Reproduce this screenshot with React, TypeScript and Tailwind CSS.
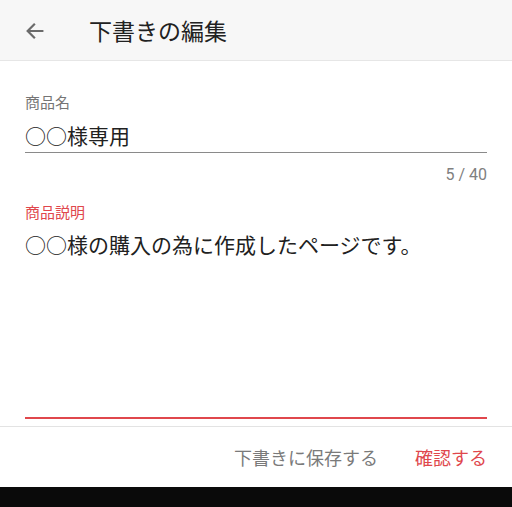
import { VoidFunctionComponent } from "react";

const jp = { fontFamily: '"Noto Sans CJK JP", "Noto Sans", sans-serif' };

const BackArrow: VoidFunctionComponent = () => (
  <svg width="22" height="22" viewBox="0 0 24 24" fill="none">
    <path
      d="M20 12H4.5M11 5l-7 7 7 7"
      stroke="#6b6b6b"
      strokeWidth="2.4"
      strokeLinecap="square"
    />
  </svg>
);

export default function App() {
  return (
    <div className="w-[512px] h-[507px] flex flex-col bg-white" style={jp}>
      <header className="h-[61px] shrink-0 flex items-center bg-[#f7f7f7] border-b border-[#e6e6e6]">
        <div className="pl-[24px] pt-[1px] flex items-center">
          <BackArrow />
        </div>
        <h1 className="ml-[43px] text-[23px] leading-[30px] text-[#212121]">
          下書きの編集
        </h1>
      </header>

      <main className="flex-1 flex flex-col px-[25px]">
        <div className="mt-[31px] text-[15px] leading-[20px] text-[#757575]">
          商品名
        </div>
        <div className="mt-[9px] pb-[3px] text-[21px] leading-[28px] text-[#212121] border-b border-[#8a8a8a]">
          ○○様専用
        </div>
        <div
          className="mt-[12px] text-right text-[16px] leading-[20px] text-[#808080]"
          style={{ fontFamily: "Roboto, sans-serif" }}
        >
          5 / 40
        </div>
        <div className="mt-[17px] text-[15px] leading-[20px] text-[#e0474c]">
          商品説明
        </div>
        <div className="mt-[8px] h-[189px] text-[21px] leading-[28px] text-[#212121] border-b-2 border-[#e0474c]">
          ○○様の購入の為に作成したページです。
        </div>
      </main>

      <footer className="h-[61px] shrink-0 mt-[5px] border-t border-[#e3e3e3] flex items-center justify-end gap-[37px] pr-[25px] text-[18px] leading-[24px]">
        <button className="text-[#7a7a7a]">下書きに保存する</button>
        <button className="text-[#e0474c]">確認する</button>
      </footer>
      <div className="h-[20px] shrink-0 bg-[#0a0a0a]" />
    </div>
  );
}
